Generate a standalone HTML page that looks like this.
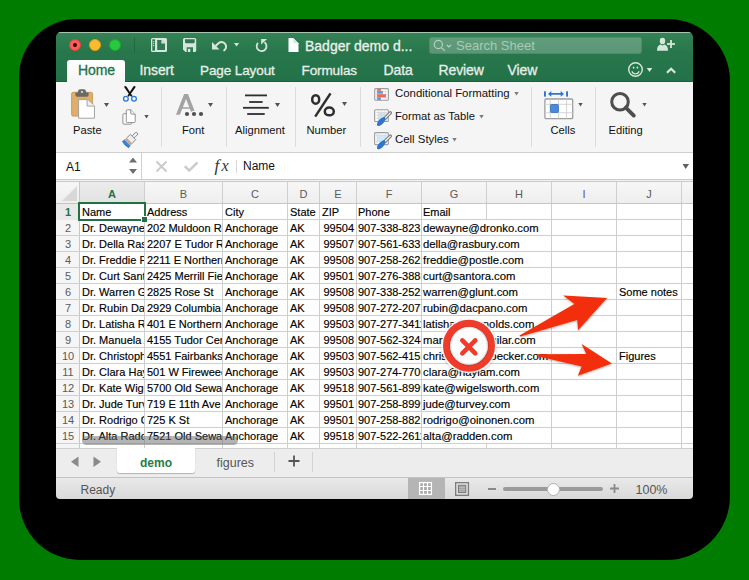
<!DOCTYPE html>
<html><head><meta charset="utf-8">
<style>
*{margin:0;padding:0;box-sizing:border-box}
html,body{width:749px;height:580px;overflow:hidden;background:#007c00;font-family:"Liberation Sans",sans-serif}
.abs{position:absolute}
#shadow{position:absolute;left:19px;top:19px;width:711px;height:541px;background:#000;border-radius:58px 62px 64px 61px}
#win{position:absolute;left:0;top:0;width:749px;height:580px;clip-path:inset(32px 56px 81px 56px round 5px 5px 4px 4px)}
#title{position:absolute;left:56px;top:32px;width:637px;height:50px;background:linear-gradient(#348256,#28774c 20px,#237148 50px)}
#title .hl{position:absolute;left:0;top:0;width:637px;height:1px;background:#a6c6b2}
.tl{position:absolute;top:39px;width:12px;height:12px;border-radius:50%}
.qtxt{position:absolute;font-size:14px;color:#e9f2ec;white-space:nowrap;-webkit-text-stroke:0.3px currentColor}
.tab{position:absolute;top:62px;font-size:14px;color:#e6efe9;white-space:nowrap;letter-spacing:-0.1px;-webkit-text-stroke:0.3px currentColor}
#ribbon{position:absolute;left:56px;top:82px;width:637px;height:71px;background:#f5f5f5;border-bottom:1px solid #cfcfcf}
.sep{position:absolute;top:87px;width:1px;height:60px;background:#dcdcdc}
.lbl{position:absolute;font-size:11.2px;color:#111;white-space:nowrap}
.arr{position:absolute;width:5px;height:4px;background:#505050;clip-path:polygon(0 0,100% 0,50% 100%)}
#fbar{position:absolute;left:56px;top:153px;width:637px;height:29px;background:#fff}
.vl{position:absolute;width:1px;background:#cfcfcf}
.hl{position:absolute;left:56px;width:637px;height:1px;background:#cfcfcf}
.c{position:absolute;height:15px;font-size:11px;line-height:15px;color:#000;white-space:nowrap;overflow:hidden;padding-left:2px;-webkit-text-stroke:0.15px #000}
.c.r{text-align:right;padding-right:2px;padding-left:0}
.rn{position:absolute;left:56px;width:23px;height:16px;font-size:11px;line-height:15px;text-align:center;color:#5a5a5a;padding-left:1px}
.rn.sel{color:#217346;font-weight:bold;background:#e9e9e9}
.cn{position:absolute;top:182px;height:21px;font-size:11px;line-height:21px;padding-top:2px;text-align:center;color:#5a5a5a;background:linear-gradient(#f7f7f7,#eeeeee)}
.cn.sel{color:#217346;font-weight:bold;background:linear-gradient(#ececec,#e2e2e2)}
</style></head><body>
<div id="shadow"></div>
<div id="win">
  <!-- title bar -->
  <div id="title"><div class="hl"></div></div>
  <div class="tl" style="left:69px;background:#fc5f57;border:1px solid #e0443e"></div>
  <div class="abs" style="left:73px;top:42.6px;width:4px;height:4px;border-radius:50%;background:#3d0000"></div>
  <div class="tl" style="left:89px;background:#fdbc2e;border:1px solid #e09e1a"></div>
  <div class="tl" style="left:109px;background:#28c840;border:1px solid #1aab29"></div>
  <div class="abs" style="left:134px;top:37px;width:1px;height:16px;background:#24683f"></div>
  <!-- QAT icons -->
  <svg class="abs" style="left:148px;top:35px" width="130" height="20" viewBox="0 0 130 20">
    <g fill="#d7e6dc">
      <rect x="3" y="3" width="16" height="14" rx="1.5"/>
    </g>
    <g fill="#2f7a52">
      <rect x="4.3" y="4.3" width="2.7" height="11.4"/>
      <path d="M9.2 5h4.2l3.6 3.6v6.4h-7.8z"/>
    </g>
    <g fill="#d7e6dc">
      <circle cx="5.65" cy="6.6" r="0.7"/><circle cx="5.65" cy="8.6" r="0.7"/><circle cx="5.65" cy="10.6" r="0.7"/>
      <path d="M13.4 5l3.6 3.6h-3.6z"/>
    </g>
    <path d="M35 4.5q0-1.5 1.5-1.5h10.2q1.5 0 1.5 1.5v11q0 1.5-1.5 1.5h-9.2l-2.5-2.5z" fill="#d7e6dc"/>
    <path d="M37 4.2h9.7v2.8q0 1.2-1.2 1.2h-7.3q-1.2 0-1.2-1.2z" fill="#2f7a52"/>
    <path d="M38.7 17v-4.8h6.3v4.8z" fill="#2f7a52"/>
    <rect x="39.9" y="13.8" width="2.4" height="3.2" fill="#d7e6dc"/>
    <path d="M64 7v7.5h7.5z" fill="#d7e6dc"/>
    <path d="M67.5 11L71 7.8A4.6 4.6 0 1 1 75.5 15.8" fill="none" stroke="#d7e6dc" stroke-width="2"/>
    <path d="M86 7.9h5.1l-2.55 3.7z" fill="#d7e6dc"/>
    <path d="M110.04 7.84A4.9 4.9 0 1 0 116.5 7.3" fill="none" stroke="#d7e6dc" stroke-width="1.8"/>
    <path d="M113.1 4.1h6l-6 5.5z" fill="#d7e6dc"/>
  </svg>
  <svg class="abs" style="left:287.5px;top:37px" width="12" height="16" viewBox="0 0 12 16">
    <path d="M0.5 1h4.8l5.2 5.2v8.8h-10z" fill="#fff"/>
    <path d="M5.3 1.6v4.2q0 0.5 0.5 0.5h4.1z" fill="#dde6e0"/>
  </svg>
  <div class="qtxt" style="left:305px;top:38px">Badger demo d...</div>
  <!-- search -->
  <div class="abs" style="left:428.5px;top:36.5px;width:213px;height:17.5px;border-radius:3px;background:rgba(255,255,255,0.24);border:1px solid rgba(0,0,0,0.1)"></div>
  <svg class="abs" style="left:432px;top:38px" width="24" height="16" viewBox="0 0 24 16">
    <g fill="none" stroke="#b3d3bd" stroke-width="1.15">
      <circle cx="6.35" cy="6.5" r="4.1"/>
      <path d="M9.3 9.5l3.6 3.4"/>
      <path d="M14.8 7l2.1 2l2.1-2"/>
    </g>
  </svg>
  <div class="abs" style="left:456px;top:38px;font-size:13px;color:#a8cbb4;white-space:nowrap">Search Sheet</div>
  <svg class="abs" style="left:655px;top:35px" width="24" height="18" viewBox="0 0 24 18">
    <g fill="#d7e6dc">
      <ellipse cx="7.5" cy="6" rx="2.7" ry="3.3"/>
      <path d="M2 15.8c0-3.5 1.2-5.6 3.6-6.2l1.9 0.9l1.9-0.9c2.4 0.6 3.6 2.7 3.6 6.2z"/>
      <rect x="12" y="8.1" width="8" height="1.8"/>
      <rect x="15.1" y="5" width="1.8" height="8"/>
    </g>
  </svg>
  <!-- tabs -->
  <div class="abs" style="left:67px;top:60px;width:58px;height:22px;background:linear-gradient(#ffffff,#f5f5f5);border-radius:3px 3px 0 0"></div>
  <div class="tab" style="left:78px;color:#217346">Home</div>
  <div class="tab" style="left:139.5px">Insert</div>
  <div class="tab" style="left:200px;font-size:13.5px;top:62.5px">Page Layout</div>
  <div class="tab" style="left:301.5px;font-size:13.5px;top:62.5px">Formulas</div>
  <div class="tab" style="left:383.5px">Data</div>
  <div class="tab" style="left:438.5px">Review</div>
  <div class="tab" style="left:507.5px">View</div>
  <svg class="abs" style="left:625px;top:61px" width="56" height="20" viewBox="0 0 56 20">
    <g fill="none" stroke="#d7e6dc" stroke-width="1.4">
      <circle cx="10.5" cy="8.5" r="6.8"/>
      <path d="M6.8 10.3c1 1.9 2.2 2.6 3.7 2.6s2.7-0.7 3.7-2.6"/>
    </g>
    <ellipse cx="8.6" cy="6.6" rx="0.8" ry="1.2" fill="#d7e6dc"/><ellipse cx="12.4" cy="6.6" rx="0.8" ry="1.2" fill="#d7e6dc"/>
    <path d="M21.7 7h5.6l-2.8 4z" fill="#d7e6dc"/>
    <path d="M42 11.8l4.1-4.1l4.1 4.1" fill="none" stroke="#d7e6dc" stroke-width="2.2"/>
  </svg>
  <div class="abs" style="left:56px;top:81px;width:11px;height:1px;background:#1f5e3b"></div>
  <div class="abs" style="left:125px;top:81px;width:568px;height:1px;background:#1f5e3b"></div>

  <!-- ribbon -->
  <div id="ribbon"></div>
  <div class="sep" style="left:161px"></div>
  <div class="sep" style="left:226px"></div>
  <div class="sep" style="left:295px"></div>
  <div class="sep" style="left:360px"></div>
  <div class="sep" style="left:531px"></div>
  <div class="sep" style="left:595px"></div>
  <!-- paste -->
  <svg class="abs" style="left:68px;top:86px" width="32" height="36" viewBox="0 0 32 36">
    <rect x="3.6" y="6.3" width="21" height="23.8" rx="1.5" fill="#e0ae68" stroke="#c89a55" stroke-width="0.9"/>
    <path d="M7.4 6.4h13.2v2.6q0 1.8-1.8 1.8h-9.6q-1.8 0-1.8-1.8z" fill="#696969"/>
    <path d="M10 7v-1.6q0-2.2 2.2-2.2h3.6q2.2 0 2.2 2.2v1.6z" fill="#696969"/>
    <rect x="12.9" y="5.1" width="2.2" height="1.6" rx="0.5" fill="#e8dc9a"/>
    <path d="M10.6 13.6h8.5l7.4 6.5v12.1h-15.9z" fill="#fff" stroke="#9b9b9b" stroke-width="0.9"/>
    <path d="M19.1 13.6v6.5h7.4" fill="#efefef" stroke="#9b9b9b" stroke-width="0.9"/>
  </svg>
  <div class="lbl" style="left:73px;top:124px">Paste</div>
  <!-- scissors -->
  <svg class="abs" style="left:121px;top:85px" width="18" height="18" viewBox="0 0 18 18">
    <path d="M3.4 1.2Q4.4 0.6 5.4 1.6L11.5 10.9L10 11.7L3.6 2.8Q3.1 1.9 3.4 1.2z" fill="#111"/>
    <path d="M14.4 1.2Q13.4 0.6 12.4 1.6L6.3 10.9L7.8 11.7L14.2 2.8Q14.7 1.9 14.4 1.2z" fill="#111"/>
    <circle cx="4.9" cy="13.8" r="2.35" fill="#f5f5f5" stroke="#2c77d4" stroke-width="1.3"/>
    <circle cx="13" cy="13.8" r="2.35" fill="#f5f5f5" stroke="#2c77d4" stroke-width="1.3"/>
  </svg>
  <!-- copy -->
  <svg class="abs" style="left:121px;top:108px" width="18" height="18" viewBox="0 0 18 18">
    <rect x="1.9" y="5.7" width="8.8" height="10.5" rx="1" fill="#fff" stroke="#8c8c8c" stroke-width="0.95"/>
    <path d="M6.3 1.8h3.6l4.3 4.3v7.5q0 1-1 1h-6.9q-1 0-1-1v-10.8q0-1 1-1z" fill="#fff" stroke="#8c8c8c" stroke-width="0.95"/>
    <path d="M9.7 1.8v3.3q0 1 1 1h3.5" fill="#f0f0f0" stroke="#8c8c8c" stroke-width="0.95"/>
  </svg>
  <!-- brush -->
  <svg class="abs" style="left:120px;top:131px" width="20" height="18" viewBox="0 0 20 18">
    <g transform="translate(16.8,2.3) rotate(45)">
      <rect x="-1.5" y="-0.6" width="3" height="6.2" rx="1.5" fill="#f2f2f2" stroke="#858585" stroke-width="0.9"/>
      <path d="M-3.7 5.2h7.4l0.2 5.6h-7.8z" fill="#eeeeee" stroke="#858585" stroke-width="0.9"/>
      <path d="M-3.9 11h7.8l0.6 2.4h-9z" fill="#c7a893"/>
      <path d="M-4.5 13.3h9v2.6q-4.5 1.2-9 0z" fill="#3a84da"/>
      <path d="M-4.5 15.9q4.5 1.2 9 0" fill="none" stroke="#1f64bb" stroke-width="0.9"/>
    </g>
  </svg>
  <!-- font -->
  <svg class="abs" style="left:174px;top:90px" width="34" height="28" viewBox="0 0 34 28">
    <path d="M2.00 24.70 L10.10 4.00 L14.00 4.00 L22.10 24.70 L18.20 24.70 L15.85 18.70 L8.25 18.70 L5.90 24.70Z M8.83 17.20 L12.05 9.00 L15.27 17.20Z" fill="#a3a3a3" fill-rule="evenodd"/>
    <g fill="#f5f5f5"><circle cx="13" cy="24" r="3.2"/><circle cx="20" cy="24" r="3.2"/><circle cx="27" cy="24" r="3.2"/></g>
    <g fill="#4f4f4f"><circle cx="13" cy="24" r="2.1"/><circle cx="20" cy="24" r="2.1"/><circle cx="27" cy="24" r="2.1"/></g>
  </svg>
  <div class="lbl" style="left:182px;top:124px">Font</div>
  <!-- alignment -->
  <svg class="abs" style="left:242px;top:94px" width="28" height="22" viewBox="0 0 28 22">
    <g fill="#2e2e2e">
      <rect x="3" y="0.5" width="22" height="1.8"/>
      <rect x="7.2" y="7.1" width="13.4" height="1.8"/>
      <rect x="1" y="12.9" width="25.8" height="1.8"/>
      <rect x="5.2" y="19.1" width="17.5" height="1.8"/>
    </g>
  </svg>
  <svg class="abs" style="left:308px;top:91px" width="30" height="28" viewBox="0 0 30 28">
    <g fill="none" stroke="#2e2e2e" stroke-width="2.5">
      <ellipse cx="7.7" cy="8.45" rx="3.5" ry="4.3"/>
      <ellipse cx="21.3" cy="20.45" rx="4.5" ry="3.9"/>
      <path d="M7.2 25.6L22.5 2.4"/>
    </g>
  </svg>
  <div class="lbl" style="left:235px;top:124px">Alignment</div>
  <!-- number -->
  
  <div class="lbl" style="left:306.5px;top:124px">Number</div>
  <!-- styles -->
  <svg class="abs" style="left:372px;top:86px" width="20" height="64" viewBox="0 0 20 64">
    <rect x="2.7" y="2.6" width="13.7" height="11.6" rx="1" fill="#fff" stroke="#9a9a9a" stroke-width="1.1"/>
    <path d="M2.7 5.6h13.7M2.7 8.6h13.7M2.7 11.4h13.7M5 2.6v11.6M13.6 2.6v11.6" stroke="#d0d0d0" stroke-width="0.6"/>
    <rect x="5.1" y="3" width="3.9" height="1.9" fill="#ef6b62"/>
    <rect x="5.1" y="5" width="5.8" height="2.8" fill="#5d9fe0"/>
    <rect x="5.1" y="8.2" width="8.8" height="3.2" fill="#ef6b62"/>
    <rect x="5.1" y="11.3" width="3.8" height="2.7" fill="#5d9fe0"/>
    <rect x="2.6" y="23.8" width="13.7" height="11.7" rx="1" fill="#fff" stroke="#9a9a9a" stroke-width="1.1"/>
    <rect x="6.1" y="26.4" width="9.7" height="8.6" fill="#cfe9f8"/>
    <path d="M2.6 26.4h13.7M2.6 29.1h13.7M2.6 32.2h13.7M6.1 23.8v11.7M9.2 23.8v11.7M12.3 23.8v11.7" stroke="#d2d2d2" stroke-width="0.7"/>
    <path d="M18.30000000000001 26.900000000000006L12.600000000000023 32.599999999999994" stroke="#7c7c7c" stroke-width="3.4" stroke-linecap="round"/>
    <path d="M18.30000000000001 26.900000000000006L12.600000000000023 32.599999999999994" stroke="#f4f4f4" stroke-width="1.3" stroke-linecap="round"/>
    <ellipse cx="9.199999999999989" cy="35.599999999999994" rx="5.6" ry="2.6" transform="rotate(-48 9.199999999999989 35.599999999999994)" fill="#2f74cf"/>
    <rect x="2.6" y="46.6" width="13.7" height="12" rx="1" fill="#fff" stroke="#9a9a9a" stroke-width="1.1"/>
    <rect x="5" y="49" width="8.9" height="6.4" fill="#cfe9f8"/>
    <path d="M2.6 49h13.7M2.6 55.5h13.7M5 46.6v12M13.9 46.6v12" stroke="#c8d6e6" stroke-width="0.7"/>
    <path d="M18.30000000000001 50.099999999999994L12.600000000000023 55.79999999999998" stroke="#7c7c7c" stroke-width="3.4" stroke-linecap="round"/>
    <path d="M18.30000000000001 50.099999999999994L12.600000000000023 55.79999999999998" stroke="#f4f4f4" stroke-width="1.3" stroke-linecap="round"/>
    <ellipse cx="9.199999999999989" cy="58.79999999999998" rx="5.6" ry="2.6" transform="rotate(-48 9.199999999999989 58.79999999999998)" fill="#2f74cf"/>
  </svg>
  <div class="lbl" style="left:395px;top:86.5px;font-size:11.4px">Conditional Formatting</div>
  <div class="lbl" style="left:395px;top:109.5px;font-size:11.2px">Format as Table</div>
  <div class="lbl" style="left:395px;top:132.5px;font-size:11.4px">Cell Styles</div>
  <!-- cells -->
  <svg class="abs" style="left:543px;top:89px" width="31" height="31" viewBox="0 0 31 31">
    <rect x="1" y="2.3" width="1.9" height="5.3" fill="#2f74cf"/>
    <rect x="23.1" y="2.3" width="1.9" height="5.3" fill="#2f74cf"/>
    <path d="M7 4.9h12" stroke="#2f74cf" stroke-width="1.9"/>
    <path d="M5 4.9l3.3-2.9v5.8zM21 4.9l-3.3-2.9v5.8z" fill="#2f74cf"/>
    <rect x="1.9" y="10" width="27.8" height="19.6" rx="1.2" fill="#fff" stroke="#9c9c9c" stroke-width="1.3"/>
    <path d="M1.9 15.3h27.8M1.9 23.7h27.8M7.2 10v19.6M15.5 10v19.6M23.6 10v19.6" stroke="#cfcfcf" stroke-width="0.9"/>
    <rect x="7.4" y="15.5" width="8" height="8" rx="1" fill="#4a8ad8" stroke="#2f6fc4" stroke-width="0.8"/>
  </svg>
  <div class="lbl" style="left:550.5px;top:124px">Cells</div>
  <!-- editing -->
  <svg class="abs" style="left:609px;top:92px" width="30" height="28" viewBox="0 0 30 28">
    <circle cx="11" cy="9.8" r="8.3" fill="none" stroke="#4e4e4e" stroke-width="3"/>
    <path d="M16.8 15.6l8 8" stroke="#4e4e4e" stroke-width="3.8" stroke-linecap="round"/>
  </svg>
  <div class="lbl" style="left:608.5px;top:124px">Editing</div>

    <div class="arr" style="left:104px;top:103px;background:#555"></div>
  <div class="arr" style="left:144px;top:114.5px;background:#555"></div>
  <div class="arr" style="left:208px;top:103px;background:#555"></div>
  <div class="arr" style="left:275px;top:103px;background:#505050"></div>
  <div class="arr" style="left:342px;top:102px;background:#555"></div>
  <div class="arr" style="left:514px;top:91.5px;background:#7a7a7a"></div>
  <div class="arr" style="left:479px;top:114.5px;background:#7a7a7a"></div>
  <div class="arr" style="left:452px;top:137.5px;background:#7a7a7a"></div>
  <div class="arr" style="left:578px;top:102.5px;background:#555"></div>
  <div class="arr" style="left:642px;top:102.5px;background:#555"></div>
  <!-- formula bar -->
  <div id="fbar"></div>
  <div class="arr" style="left:682.5px;top:164px;width:6.5px;height:5px;background:#606060"></div>
  <div class="abs" style="left:66px;top:160px;font-size:12px;color:#111">A1</div>
  <svg class="abs" style="left:128px;top:156px" width="10" height="20" viewBox="0 0 10 20">
    <path d="M1 6.5l4-5l4 5z M1 13l4 5l4-5z" fill="#6f6f6f"/>
  </svg>
  <div class="abs" style="left:141px;top:153px;width:1px;height:27px;background:#cfcfcf"></div>
  <svg class="abs" style="left:154px;top:159px" width="48" height="16" viewBox="0 0 48 16">
    <path d="M2.5 2.5l10 10M12.5 2.5l-10 10" stroke="#cbcbcb" stroke-width="2"/>
    <path d="M30.8 7.2l4.4 4.4l8.3-8.3" stroke="#cbcbcb" stroke-width="2.5" fill="none"/>
  </svg>
  <div class="abs" style="left:214.5px;top:156px;font-family:'Liberation Serif',serif;font-style:italic;font-size:17px;color:#333">f</div>
  <div class="abs" style="left:221.5px;top:157px;font-family:'Liberation Serif',serif;font-style:italic;font-size:16px;color:#333">x</div>
  <div class="abs" style="left:236px;top:160px;width:1px;height:13px;background:#d6d6d6"></div>
  <div class="abs" style="left:243px;top:159px;font-size:12px;color:#111">Name</div>
  <div class="abs" style="left:56px;top:179px;width:637px;height:1px;background:#c9c9c9"></div>
  <div class="abs" style="left:56px;top:180px;width:637px;height:1px;background:#f2f2f2"></div>
  <div class="abs" style="left:56px;top:181px;width:637px;height:1px;background:#c9c9c9"></div>

  <!-- grid -->
  <div class="abs" style="left:56px;top:182px;width:637px;height:266px;background:#fff"></div>
  <div class="abs" style="left:56px;top:203px;width:23px;height:245px;background:#f5f5f5"></div>
  <div class="abs" style="left:56px;top:182px;width:23px;height:21px;background:linear-gradient(#f7f7f7,#eeeeee)"></div>
  <svg class="abs" style="left:61px;top:185px" width="18" height="17" viewBox="0 0 18 17"><path d="M16 1v15h-15z" fill="#d8d8d8"/></svg>
<div class="vl" style="left:144px;top:182px;height:266px"></div>
<div class="vl" style="left:222px;top:182px;height:266px"></div>
<div class="vl" style="left:287px;top:182px;height:266px"></div>
<div class="vl" style="left:319px;top:182px;height:266px"></div>
<div class="vl" style="left:356px;top:182px;height:266px"></div>
<div class="vl" style="left:421px;top:182px;height:266px"></div>
<div class="vl" style="left:486px;top:182px;height:37px"></div>
<div class="vl" style="left:486px;top:443px;height:5px"></div>
<div class="vl" style="left:551px;top:182px;height:266px"></div>
<div class="vl" style="left:616px;top:182px;height:266px"></div>
<div class="vl" style="left:681px;top:182px;height:266px"></div>
<div class="vl" style="left:79px;top:182px;height:266px;background:#c8c8c8"></div>
<div class="hl" style="top:203px"></div>
<div class="hl" style="top:219px"></div>
<div class="hl" style="top:235px"></div>
<div class="hl" style="top:251px"></div>
<div class="hl" style="top:267px"></div>
<div class="hl" style="top:283px"></div>
<div class="hl" style="top:299px"></div>
<div class="hl" style="top:315px"></div>
<div class="hl" style="top:331px"></div>
<div class="hl" style="top:347px"></div>
<div class="hl" style="top:363px"></div>
<div class="hl" style="top:379px"></div>
<div class="hl" style="top:395px"></div>
<div class="hl" style="top:411px"></div>
<div class="hl" style="top:427px"></div>
<div class="hl" style="top:443px"></div>
<div class="rn sel" style="top:204px;padding-top:1px">1</div>
<div class="rn" style="top:220px;padding-top:1px">2</div>
<div class="rn" style="top:236px;padding-top:1px">3</div>
<div class="rn" style="top:252px;padding-top:1px">4</div>
<div class="rn" style="top:268px;padding-top:1px">5</div>
<div class="rn" style="top:284px;padding-top:1px">6</div>
<div class="rn" style="top:300px;padding-top:1px">7</div>
<div class="rn" style="top:316px;padding-top:1px">8</div>
<div class="rn" style="top:332px;padding-top:1px">9</div>
<div class="rn" style="top:348px;padding-top:1px">10</div>
<div class="rn" style="top:364px;padding-top:1px">11</div>
<div class="rn" style="top:380px;padding-top:1px">12</div>
<div class="rn" style="top:396px;padding-top:1px">13</div>
<div class="rn" style="top:412px;padding-top:1px">14</div>
<div class="rn" style="top:428px;padding-top:1px">15</div>
<div class="rn" style="top:444px;padding-top:1px">16</div>
<div class="cn sel" style="left:80px;width:64px">A</div>
<div class="cn" style="left:145px;width:77px">B</div>
<div class="cn" style="left:223px;width:64px">C</div>
<div class="cn" style="left:288px;width:31px">D</div>
<div class="cn" style="left:320px;width:36px">E</div>
<div class="cn" style="left:357px;width:64px">F</div>
<div class="cn" style="left:422px;width:64px">G</div>
<div class="cn" style="left:487px;width:64px">H</div>
<div class="cn" style="left:552px;width:64px">I</div>
<div class="cn" style="left:617px;width:64px">J</div>
<div class="cn" style="left:682px;width:12px"></div>
<div class="c" style="left:80px;top:205px;width:64px;">Name</div>
<div class="c" style="left:145px;top:205px;width:77px;">Address</div>
<div class="c" style="left:223px;top:205px;width:64px;">City</div>
<div class="c" style="left:288px;top:205px;width:31px;">State</div>
<div class="c" style="left:320px;top:205px;width:36px;">ZIP</div>
<div class="c" style="left:357px;top:205px;width:64px;padding-left:1px;">Phone</div>
<div class="c" style="left:422px;top:205px;width:194px;padding-left:1px;">Email</div>
<div class="c" style="left:80px;top:221px;width:64px;">Dr. Dewayne Dronko</div>
<div class="c" style="left:145px;top:221px;width:77px;">202 Muldoon Rd</div>
<div class="c" style="left:223px;top:221px;width:64px;">Anchorage</div>
<div class="c" style="left:288px;top:221px;width:31px;">AK</div>
<div class="c r" style="left:320px;top:221px;width:36px;">99504</div>
<div class="c" style="left:357px;top:221px;width:64px;padding-left:1px;">907-338-8231</div>
<div class="c" style="left:422px;top:221px;width:194px;padding-left:1px;font-size:11.3px;">dewayne@dronko.com</div>
<div class="c" style="left:80px;top:237px;width:64px;">Dr. Della Rasbury</div>
<div class="c" style="left:145px;top:237px;width:77px;">2207 E Tudor Rd</div>
<div class="c" style="left:223px;top:237px;width:64px;">Anchorage</div>
<div class="c" style="left:288px;top:237px;width:31px;">AK</div>
<div class="c r" style="left:320px;top:237px;width:36px;">99507</div>
<div class="c" style="left:357px;top:237px;width:64px;padding-left:1px;">907-561-6331</div>
<div class="c" style="left:422px;top:237px;width:194px;padding-left:1px;font-size:11.3px;">della@rasbury.com</div>
<div class="c" style="left:80px;top:253px;width:64px;">Dr. Freddie Postle</div>
<div class="c" style="left:145px;top:253px;width:77px;">2211 E Northern Lights</div>
<div class="c" style="left:223px;top:253px;width:64px;">Anchorage</div>
<div class="c" style="left:288px;top:253px;width:31px;">AK</div>
<div class="c r" style="left:320px;top:253px;width:36px;">99508</div>
<div class="c" style="left:357px;top:253px;width:64px;padding-left:1px;">907-258-2622</div>
<div class="c" style="left:422px;top:253px;width:194px;padding-left:1px;font-size:11.3px;">freddie@postle.com</div>
<div class="c" style="left:80px;top:269px;width:64px;">Dr. Curt Santora</div>
<div class="c" style="left:145px;top:269px;width:77px;">2425 Merrill Field Dr</div>
<div class="c" style="left:223px;top:269px;width:64px;">Anchorage</div>
<div class="c" style="left:288px;top:269px;width:31px;">AK</div>
<div class="c r" style="left:320px;top:269px;width:36px;">99501</div>
<div class="c" style="left:357px;top:269px;width:64px;padding-left:1px;">907-276-3888</div>
<div class="c" style="left:422px;top:269px;width:194px;padding-left:1px;font-size:11.3px;">curt@santora.com</div>
<div class="c" style="left:80px;top:285px;width:64px;">Dr. Warren Glunt</div>
<div class="c" style="left:145px;top:285px;width:77px;">2825 Rose St</div>
<div class="c" style="left:223px;top:285px;width:64px;">Anchorage</div>
<div class="c" style="left:288px;top:285px;width:31px;">AK</div>
<div class="c r" style="left:320px;top:285px;width:36px;">99508</div>
<div class="c" style="left:357px;top:285px;width:64px;padding-left:1px;">907-338-2522</div>
<div class="c" style="left:422px;top:285px;width:194px;padding-left:1px;font-size:11.3px;">warren@glunt.com</div>
<div class="c" style="left:80px;top:301px;width:64px;">Dr. Rubin Dacpano</div>
<div class="c" style="left:145px;top:301px;width:77px;">2929 Columbia Dr</div>
<div class="c" style="left:223px;top:301px;width:64px;">Anchorage</div>
<div class="c" style="left:288px;top:301px;width:31px;">AK</div>
<div class="c r" style="left:320px;top:301px;width:36px;">99508</div>
<div class="c" style="left:357px;top:301px;width:64px;padding-left:1px;">907-272-2077</div>
<div class="c" style="left:422px;top:301px;width:194px;padding-left:1px;font-size:11.3px;">rubin@dacpano.com</div>
<div class="c" style="left:80px;top:317px;width:64px;">Dr. Latisha Reynolds</div>
<div class="c" style="left:145px;top:317px;width:77px;">401 E Northern Lights</div>
<div class="c" style="left:223px;top:317px;width:64px;">Anchorage</div>
<div class="c" style="left:288px;top:317px;width:31px;">AK</div>
<div class="c r" style="left:320px;top:317px;width:36px;">99503</div>
<div class="c" style="left:357px;top:317px;width:64px;padding-left:1px;">907-277-3411</div>
<div class="c" style="left:422px;top:317px;width:194px;padding-left:1px;font-size:11.3px;">latisha@reynolds.com</div>
<div class="c" style="left:80px;top:333px;width:64px;">Dr. Manuela Aguilar</div>
<div class="c" style="left:145px;top:333px;width:77px;">4155 Tudor Centre Dr</div>
<div class="c" style="left:223px;top:333px;width:64px;">Anchorage</div>
<div class="c" style="left:288px;top:333px;width:31px;">AK</div>
<div class="c r" style="left:320px;top:333px;width:36px;">99508</div>
<div class="c" style="left:357px;top:333px;width:64px;padding-left:1px;">907-562-3244</div>
<div class="c" style="left:422px;top:333px;width:194px;padding-left:1px;font-size:11.3px;">manuela@aguilar.com</div>
<div class="c" style="left:80px;top:349px;width:64px;">Dr. Christopher Becker</div>
<div class="c" style="left:145px;top:349px;width:77px;">4551 Fairbanks St</div>
<div class="c" style="left:223px;top:349px;width:64px;">Anchorage</div>
<div class="c" style="left:288px;top:349px;width:31px;">AK</div>
<div class="c r" style="left:320px;top:349px;width:36px;">99503</div>
<div class="c" style="left:357px;top:349px;width:64px;padding-left:1px;">907-562-4155</div>
<div class="c" style="left:422px;top:349px;width:194px;padding-left:1px;font-size:11.3px;">christopher@becker.com</div>
<div class="c" style="left:80px;top:365px;width:64px;">Dr. Clara Haylam</div>
<div class="c" style="left:145px;top:365px;width:77px;">501 W Fireweed Ln</div>
<div class="c" style="left:223px;top:365px;width:64px;">Anchorage</div>
<div class="c" style="left:288px;top:365px;width:31px;">AK</div>
<div class="c r" style="left:320px;top:365px;width:36px;">99503</div>
<div class="c" style="left:357px;top:365px;width:64px;padding-left:1px;">907-274-7700</div>
<div class="c" style="left:422px;top:365px;width:194px;padding-left:1px;font-size:11.3px;">clara@haylam.com</div>
<div class="c" style="left:80px;top:381px;width:64px;">Dr. Kate Wigelsworth</div>
<div class="c" style="left:145px;top:381px;width:77px;">5700 Old Seward Hwy</div>
<div class="c" style="left:223px;top:381px;width:64px;">Anchorage</div>
<div class="c" style="left:288px;top:381px;width:31px;">AK</div>
<div class="c r" style="left:320px;top:381px;width:36px;">99518</div>
<div class="c" style="left:357px;top:381px;width:64px;padding-left:1px;">907-561-8999</div>
<div class="c" style="left:422px;top:381px;width:194px;padding-left:1px;font-size:11.3px;">kate@wigelsworth.com</div>
<div class="c" style="left:80px;top:397px;width:64px;">Dr. Jude Turvey</div>
<div class="c" style="left:145px;top:397px;width:77px;">719 E 11th Ave</div>
<div class="c" style="left:223px;top:397px;width:64px;">Anchorage</div>
<div class="c" style="left:288px;top:397px;width:31px;">AK</div>
<div class="c r" style="left:320px;top:397px;width:36px;">99501</div>
<div class="c" style="left:357px;top:397px;width:64px;padding-left:1px;">907-258-8999</div>
<div class="c" style="left:422px;top:397px;width:194px;padding-left:1px;font-size:11.3px;">jude@turvey.com</div>
<div class="c" style="left:80px;top:413px;width:64px;">Dr. Rodrigo Oinonen</div>
<div class="c" style="left:145px;top:413px;width:77px;">725 K St</div>
<div class="c" style="left:223px;top:413px;width:64px;">Anchorage</div>
<div class="c" style="left:288px;top:413px;width:31px;">AK</div>
<div class="c r" style="left:320px;top:413px;width:36px;">99501</div>
<div class="c" style="left:357px;top:413px;width:64px;padding-left:1px;">907-258-8822</div>
<div class="c" style="left:422px;top:413px;width:194px;padding-left:1px;font-size:11.3px;">rodrigo@oinonen.com</div>
<div class="c" style="left:80px;top:429px;width:64px;">Dr. Alta Radden</div>
<div class="c" style="left:145px;top:429px;width:77px;">7521 Old Seward Hwy</div>
<div class="c" style="left:223px;top:429px;width:64px;">Anchorage</div>
<div class="c" style="left:288px;top:429px;width:31px;">AK</div>
<div class="c r" style="left:320px;top:429px;width:36px;">99518</div>
<div class="c" style="left:357px;top:429px;width:64px;padding-left:1px;">907-522-2611</div>
<div class="c" style="left:422px;top:429px;width:194px;padding-left:1px;font-size:11.3px;">alta@radden.com</div>
<div class="c" style="left:617px;top:285px;width:85px;">Some notes</div>
<div class="c" style="left:617px;top:349px;width:85px;">Figures</div>
  <div class="abs" style="left:56px;top:203px;width:637px;height:1px;background:#c4c4c4"></div>
  <!-- selection -->
  <div class="abs" style="left:78px;top:202px;width:68px;height:19px;border:2px solid #217346"></div>
  <div class="abs" style="left:141px;top:216px;width:6px;height:6px;background:#217346;border-top:1px solid #fff;border-left:1px solid #fff"></div>
  <!-- scroll bar overlay -->
  <div class="abs" style="left:82px;top:435.5px;width:156px;height:9px;border-radius:4.5px;background:rgba(105,105,105,0.5)"></div>

  <!-- sheet tabs -->
  <div class="abs" style="left:56px;top:448px;width:637px;height:29px;background:#ededed;border-top:1px solid #cfcfcf"></div>
  <svg class="abs" style="left:68px;top:455px" width="38" height="14" viewBox="0 0 38 14">
    <path d="M10.5 1.5v10.5l-7.5-5.25z" fill="#8a8a8a"/>
    <path d="M25.5 1.5v10.5l7.5-5.25z" fill="#8a8a8a"/>
  </svg>
  <div class="abs" style="left:117px;top:448px;width:78px;height:25px;background:#fff;border-radius:0 0 3px 3px;box-shadow:0 1px 1px rgba(0,0,0,0.25)"></div>
  <div class="abs" style="left:140px;top:456px;font-size:12px;font-weight:bold;color:#1f7d47">demo</div>
  <div class="abs" style="left:216.5px;top:456px;font-size:12.5px;color:#555">figures</div>
  <div class="abs" style="left:274px;top:452px;width:1px;height:20px;background:#d2d2d2"></div>
  <svg class="abs" style="left:287px;top:455px" width="14" height="12" viewBox="0 0 14 12"><path d="M1.5 6h11M7 0.5v11" stroke="#555" stroke-width="1.8"/></svg>
  <div class="abs" style="left:312px;top:452px;width:1px;height:20px;background:#d2d2d2"></div>

  <!-- status bar -->
  <div class="abs" style="left:56px;top:477px;width:637px;height:22px;background:linear-gradient(#e9e9e9,#d9d9d9);border-top:1px solid #c2c2c2"></div>
  <div class="abs" style="left:80.5px;top:482.5px;font-size:12px;color:#555">Ready</div>
  <div class="abs" style="left:408px;top:478px;width:37px;height:21px;background:#b5b5b5"></div>
  <svg class="abs" style="left:418px;top:481px" width="16" height="16" viewBox="0 0 16 16">
    <rect x="1.6" y="1.6" width="11.8" height="11.8" fill="#a9a9a9" stroke="#fff" stroke-width="1.3"/>
    <path d="M5.5 1.6v11.8M9.5 1.6v11.8M1.6 5.5h11.8M1.6 9.5h11.8" stroke="#fff" stroke-width="1.2"/>
  </svg>
  <svg class="abs" style="left:454px;top:481px" width="16" height="16" viewBox="0 0 16 16">
    <rect x="1.65" y="1.65" width="12.8" height="12.7" fill="none" stroke="#7c7c7c" stroke-width="1.3"/>
    <rect x="4.5" y="4.3" width="7.2" height="7.2" fill="none" stroke="#7c7c7c" stroke-width="1.1"/>
    <path d="M5 5.9h6.2M5 7.9h6.2M5 9.9h6.2" stroke="#7c7c7c" stroke-width="1"/>
  </svg>
  <div class="abs" style="left:488px;top:488px;width:8px;height:2px;background:#8a8a8a"></div>
  <div class="abs" style="left:503px;top:486.5px;width:100px;height:4.5px;border-radius:3px;background:#9a9a9a"></div>
  <div class="abs" style="left:547px;top:482.5px;width:13px;height:13px;border-radius:50%;background:#fff;border:1px solid #b0b0b0"></div>
  <svg class="abs" style="left:609px;top:483px" width="11" height="11" viewBox="0 0 11 11"><path d="M1 5.5h9M5.5 1v9" stroke="#8a8a8a" stroke-width="1.8"/></svg>
  <div class="abs" style="left:635.5px;top:482.5px;font-size:12.5px;color:#555">100%</div>
</div>

<!-- annotations -->
<svg class="abs" style="left:0;top:0" width="749" height="580" viewBox="0 0 749 580">
  <defs>
    <filter id="sh" x="-20%" y="-20%" width="140%" height="140%"><feDropShadow dx="0" dy="1" stdDeviation="1" flood-color="#000" flood-opacity="0.3"/></filter>
  </defs>
  <path d="M519.5 335.5 L574.4 304 L563.2 295.6 L607.1 297.9 L578.1 330.2 L577.2 319.9 L520.5 336.5 Z" fill="#f22e08" filter="url(#sh)"/>
  <path d="M536.7 354.3 L586.3 353.9 L581.6 344 L611.9 363.6 L577.9 375.8 L581.6 366.4 L537.7 356.2 Z" fill="#f22e08" filter="url(#sh)"/>
  <g filter="url(#sh)">
    <circle cx="469" cy="345.7" r="27.5" fill="#fff" opacity="0.85"/>
    <circle cx="469" cy="345.7" r="22.5" fill="none" stroke="#ef3a2c" stroke-width="7"/>
  </g>
  <circle cx="469" cy="345.9" r="18.8" fill="rgba(255,255,255,0.72)" stroke="rgba(0,0,0,0.13)" stroke-width="2"/>
  <path d="M462.3 340.4l13 13M475.3 340.4l-13 13" stroke="#ef3a2c" stroke-width="4.6" stroke-linecap="round"/>
</svg>
</body></html>
